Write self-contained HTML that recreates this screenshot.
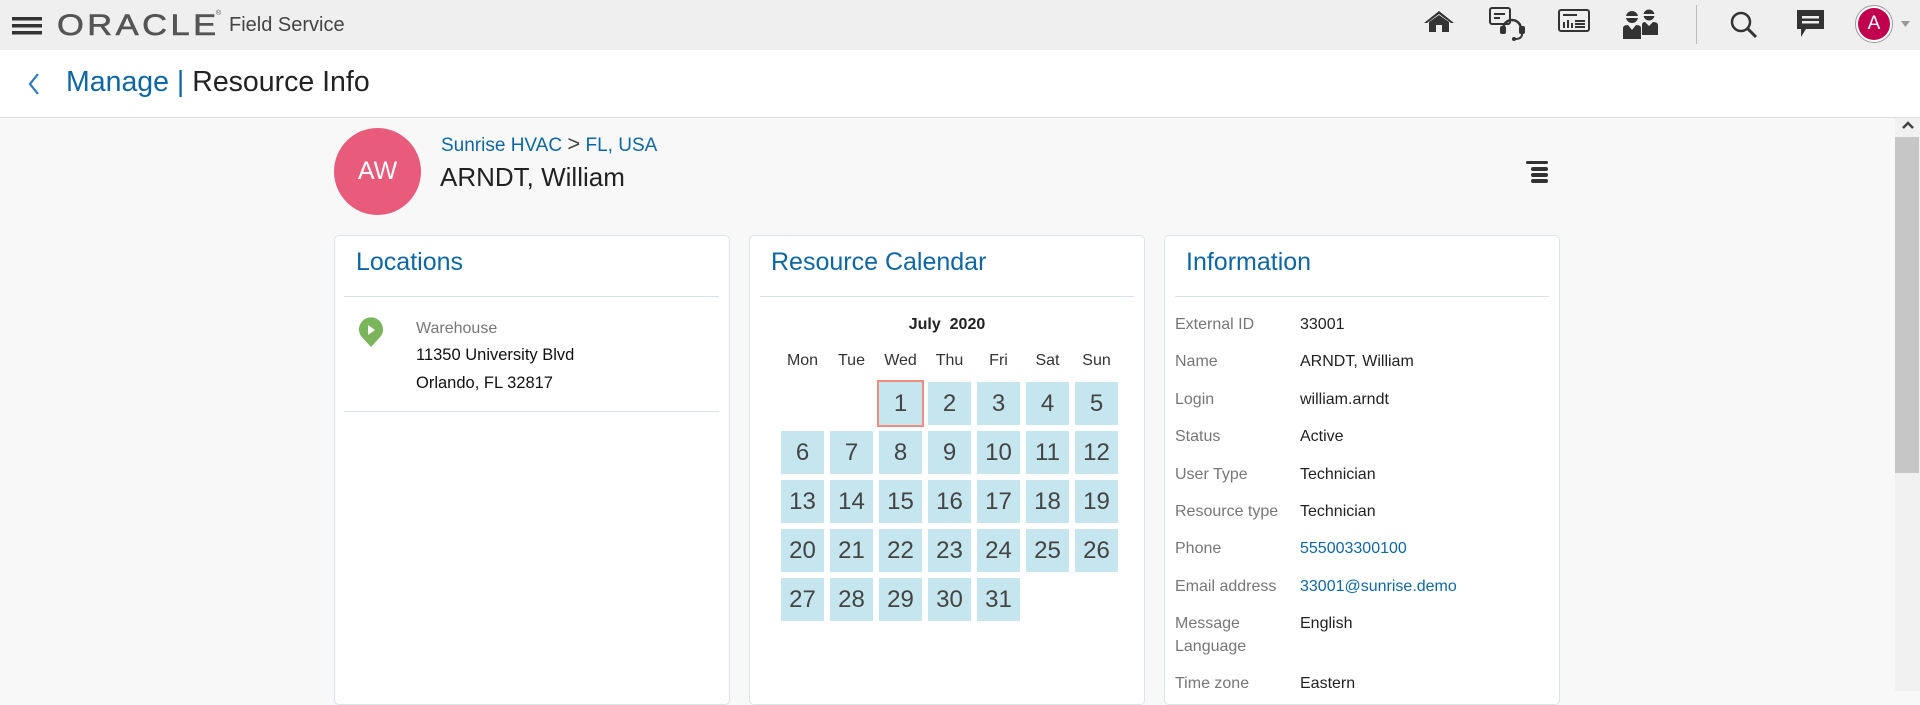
<!DOCTYPE html>
<html><head><meta charset="utf-8"><style>
*{margin:0;padding:0;box-sizing:border-box}
body{width:1920px;height:691px;overflow:hidden;background:#f8f8f8;font-family:"Liberation Sans",sans-serif;position:relative}
.a{position:absolute;white-space:nowrap}
.hdr{left:0;top:0;width:1920px;height:50px;background:#efefef}
.tb{left:0;top:50px;width:1920px;height:68px;background:#fff;border-bottom:1px solid #dcdcdc}
.card{background:#fff;border:1px solid #dde3ea;border-radius:5px;top:235px;height:470px}
.ct{font-size:25px;color:#0e67a5;top:248px}
.sep{height:1px;background:#dbe1e8;top:296px}
.cell{position:absolute;width:43px;height:43px;background:#c5e6ee;color:#444;font-size:24px;text-align:center;line-height:43px}
.dh{position:absolute;width:49px;text-align:center;font-size:16px;color:#333;top:352px}
.lb{font-size:16px;color:#777;left:1175px}
.vl{font-size:16px;color:#222;left:1300px}
.bl{color:#0e67a5}
</style></head><body>
<div class="a hdr"></div>
<svg class="a" style="left:12px;top:17px" width="30" height="18"><rect y="0" width="30" height="3.5" fill="#333"/><rect y="7" width="30" height="3.5" fill="#333"/><rect y="14" width="30" height="3.5" fill="#333"/></svg>
<div class="a" style="left:57px;top:9px;font-size:30px;color:#555;letter-spacing:3px;transform:scaleX(1.15);transform-origin:left;-webkit-text-stroke:0.6px #555">ORACLE</div>
<div class="a" style="left:216px;top:10px;font-size:7px;color:#555">®</div>
<div class="a" style="left:229px;top:14px;font-size:20px;color:#444">Field Service</div>
<!-- header icons -->
<svg class="a" style="left:1423px;top:10px" width="32" height="22"><path d="M16 1 L1 13 L4 13 L16 4 L28 13 L31 13Z" fill="#333"/><path d="M6 12 L16 5 L26 12 V22 H19 V15 H13 V22 H6Z" fill="#333"/></svg>
<svg class="a" style="left:1489px;top:7px" width="37" height="34"><rect x="1" y="1" width="20" height="16" rx="2" fill="none" stroke="#333" stroke-width="2"/><rect x="5" y="6" width="11" height="2" fill="#333"/><rect x="5" y="10" width="6" height="2" fill="#333"/><path d="M14 22 a9 9 0 0 1 18 0" fill="none" stroke="#333" stroke-width="2.5"/><rect x="11" y="19" width="6" height="8" rx="2" fill="#333"/><rect x="30" y="19" width="6" height="8" rx="2" fill="#333"/><path d="M33 27 Q33 32 26 32" fill="none" stroke="#333" stroke-width="2"/><circle cx="25" cy="32" r="2" fill="#333"/></svg>
<svg class="a" style="left:1558px;top:9px" width="32" height="23"><rect x="1" y="1" width="30" height="21" rx="2" fill="none" stroke="#333" stroke-width="2"/><rect x="5" y="5" width="14" height="2" fill="#333"/><rect x="5" y="13" width="2" height="6" fill="#333"/><rect x="9" y="11" width="2" height="8" fill="#333"/><rect x="13" y="14" width="2" height="5" fill="#333"/><rect x="17" y="11" width="10" height="2" fill="#333"/><rect x="17" y="14" width="10" height="2" fill="#333"/><rect x="17" y="17" width="10" height="2" fill="#333"/></svg>
<svg class="a" style="left:1623px;top:8px" width="37" height="32"><circle cx="9" cy="9" r="6" fill="#333"/><rect x="2" y="8" width="14" height="2" fill="#efefef"/><circle cx="26" cy="7" r="5.5" fill="#333"/><rect x="19" y="6" width="14" height="2" fill="#efefef"/><path d="M0 31 V20 Q0 17 5 17 L9 22 L13 17 Q18 17 18 20 V31Z" fill="#333"/><path d="M19 27 V17 Q19 14 22 14 L26 18 L30 14 Q35 14 35 17 V27Z" fill="#333"/></svg>
<div class="a" style="left:1696px;top:5px;width:1px;height:39px;background:#bbb"></div>
<svg class="a" style="left:1730px;top:11px" width="28" height="28"><circle cx="11" cy="11" r="9" fill="none" stroke="#333" stroke-width="2.5"/><path d="M17.5 17.5 L26 26" stroke="#333" stroke-width="3"/></svg>
<svg class="a" style="left:1796px;top:9px" width="29" height="30"><path d="M1 1 H28 V20 H10 L5 28 V20 H1Z" fill="#333"/><rect x="6" y="7" width="17" height="2.5" fill="#efefef"/><rect x="6" y="12" width="17" height="2.5" fill="#efefef"/></svg>
<div class="a" style="left:1855px;top:5px;width:38px;height:38px;border-radius:50%;border:1px solid #999;background:#fff"></div>
<div class="a" style="left:1858px;top:8px;width:32px;height:32px;border-radius:50%;background:#c0004e;color:#fff;font-size:19px;text-align:center;line-height:32px">A</div>
<svg class="a" style="left:1901px;top:21px" width="9" height="6"><path d="M0 0H9L4.5 6Z" fill="#999"/></svg>
<!-- title bar -->
<div class="a tb"></div>
<svg class="a" style="left:28px;top:73px" width="12" height="22"><path d="M10 1 L2 11 L10 21" fill="none" stroke="#2a78c0" stroke-width="2.2"/></svg>
<div class="a" style="left:66px;top:66px;font-size:28.5px;color:#222"><span style="color:#0e67a5">Manage</span> <span style="color:#0e67a5">|</span> Resource Info</div>
<!-- scrollbar -->
<div class="a" style="left:1895px;top:118px;width:25px;height:573px;background:#f1f1f1"></div>
<svg class="a" style="left:1901px;top:120px" width="14" height="10"><path d="M2 8 L7 3 L12 8" fill="none" stroke="#444" stroke-width="2.5"/></svg>
<div class="a" style="left:1895px;top:137px;width:24px;height:336px;background:#c6c6c6"></div>
<!-- resource header -->
<div class="a" style="left:334px;top:128px;width:87px;height:87px;border-radius:50%;background:#e85b7a;color:#fff;font-size:25px;text-align:center;line-height:87px">AW</div>
<div class="a" style="left:441px;top:134px;font-size:19px;color:#0e67a5">Sunrise HVAC <span style="color:#444;font-size:22px;line-height:19px">&gt;</span> FL, USA</div>
<div class="a" style="left:440px;top:162px;font-size:26px;color:#222">ARNDT, William</div>
<svg class="a" style="left:1526px;top:161px" width="22" height="24"><rect x="0" y="0" width="22" height="3" rx="1.5" fill="#333"/><rect x="5" y="6" width="17" height="4" rx="2" fill="#333"/><rect x="5" y="12" width="17" height="4" rx="2" fill="#333"/><rect x="5" y="18" width="17" height="4" rx="2" fill="#333"/></svg>
<!-- cards -->
<div class="a card" style="left:334px;width:396px"></div>
<div class="a card" style="left:749px;width:396px"></div>
<div class="a card" style="left:1164px;width:396px"></div>
<div class="a ct" style="left:356px">Locations</div>
<div class="a ct" style="left:771px">Resource Calendar</div>
<div class="a ct" style="left:1186px">Information</div>
<div class="a sep" style="left:344px;width:375px"></div>
<div class="a sep" style="left:760px;width:374px"></div>
<div class="a sep" style="left:1175px;width:374px"></div>
<!-- locations -->
<svg class="a" style="left:358px;top:317px" width="26" height="31"><path d="M13 30 L3 19 A12 12 0 1 1 23 19Z" fill="#7ab55c"/><path d="M10 8 L17 13 L10 18Z" fill="#fff"/></svg>
<div class="a" style="left:416px;top:320px;font-size:16px;color:#777">Warehouse</div>
<div class="a" style="left:416px;top:346px;font-size:16.5px;color:#111">11350 University Blvd</div>
<div class="a" style="left:416px;top:374px;font-size:16.5px;color:#111">Orlando, FL 32817</div>
<div class="a sep" style="left:344px;width:375px;top:411px"></div>
<!-- calendar -->
<div class="a" style="left:760px;top:316px;width:374px;text-align:center;font-size:16px;font-weight:bold;color:#222">July &nbsp;2020</div>
<div class="dh" style="left:778px">Mon</div><div class="dh" style="left:827px">Tue</div><div class="dh" style="left:876px">Wed</div><div class="dh" style="left:925px">Thu</div><div class="dh" style="left:974px">Fri</div><div class="dh" style="left:1023px">Sat</div><div class="dh" style="left:1072px">Sun</div>
<div class="cell" style="left:877px;top:380px;width:47px;height:47px;border:2px solid #f28c80;line-height:43px">1</div>
<div class="cell" style="left:928px;top:382px">2</div><div class="cell" style="left:977px;top:382px">3</div><div class="cell" style="left:1026px;top:382px">4</div><div class="cell" style="left:1075px;top:382px">5</div>
<div class="cell" style="left:781px;top:431px">6</div><div class="cell" style="left:830px;top:431px">7</div><div class="cell" style="left:879px;top:431px">8</div><div class="cell" style="left:928px;top:431px">9</div><div class="cell" style="left:977px;top:431px">10</div><div class="cell" style="left:1026px;top:431px">11</div><div class="cell" style="left:1075px;top:431px">12</div>
<div class="cell" style="left:781px;top:480px">13</div><div class="cell" style="left:830px;top:480px">14</div><div class="cell" style="left:879px;top:480px">15</div><div class="cell" style="left:928px;top:480px">16</div><div class="cell" style="left:977px;top:480px">17</div><div class="cell" style="left:1026px;top:480px">18</div><div class="cell" style="left:1075px;top:480px">19</div>
<div class="cell" style="left:781px;top:529px">20</div><div class="cell" style="left:830px;top:529px">21</div><div class="cell" style="left:879px;top:529px">22</div><div class="cell" style="left:928px;top:529px">23</div><div class="cell" style="left:977px;top:529px">24</div><div class="cell" style="left:1026px;top:529px">25</div><div class="cell" style="left:1075px;top:529px">26</div>
<div class="cell" style="left:781px;top:578px">27</div><div class="cell" style="left:830px;top:578px">28</div><div class="cell" style="left:879px;top:578px">29</div><div class="cell" style="left:928px;top:578px">30</div><div class="cell" style="left:977px;top:578px">31</div>
<!-- information -->
<div class="a lb" style="top:316px">External ID</div><div class="a vl" style="top:316px">33001</div>
<div class="a lb" style="top:353px">Name</div><div class="a vl" style="top:353px">ARNDT, William</div>
<div class="a lb" style="top:391px">Login</div><div class="a vl" style="top:391px">william.arndt</div>
<div class="a lb" style="top:428px">Status</div><div class="a vl" style="top:428px">Active</div>
<div class="a lb" style="top:466px">User Type</div><div class="a vl" style="top:466px">Technician</div>
<div class="a lb" style="top:503px">Resource type</div><div class="a vl" style="top:503px">Technician</div>
<div class="a lb" style="top:540px">Phone</div><div class="a vl bl" style="top:540px">555003300100</div>
<div class="a lb" style="top:578px">Email address</div><div class="a vl bl" style="top:578px">33001@sunrise.demo</div>
<div class="a lb" style="top:615px">Message</div><div class="a vl" style="top:615px">English</div>
<div class="a lb" style="top:638px">Language</div>
<div class="a lb" style="top:675px">Time zone</div><div class="a vl" style="top:675px">Eastern</div>
</body></html>
